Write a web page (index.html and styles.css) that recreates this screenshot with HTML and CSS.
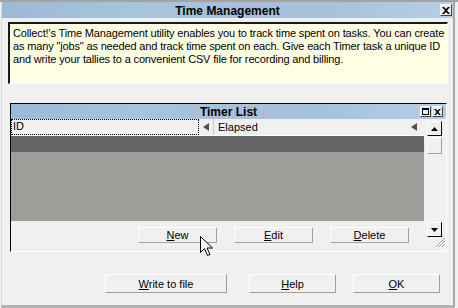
FILE: index.html
```html
<!DOCTYPE html>
<html lang="en">
  <head>
    <meta charset="UTF-8" />
    <meta name="viewport" content="width=device-width, initial-scale=1.0" />
    <title>Time Management</title>
    <link rel="stylesheet" href="styles.css">
  </head>
  <body>
    <div class="window">
      <div class="titlebar">
        <span></span>
        <span class="title">Time Management</span>
        <span class="tb-btn close">
          <svg width="8" height="7" viewBox="0 0 8 7"><path d="M0 0h2l2 2 2-2h2L5 3.5 8 7H6L4 5 2 7H0l3-3.5z" fill="#000"/></svg>
        </span>
      </div>

      <div class="desc">
        Collect!'s Time Management utility enables you to track time spent on tasks. You can create<br>
        as many "jobs" as needed and track time spent on each. Give each Timer task a unique ID<br>
        and write your tallies to a convenient CSV file for recording and billing.
      </div>

      <div class="panel">
        <div class="panel-title">
          <span></span>
          <span class="title">Timer List</span>
          <span class="ctrls">
            <span class="tb-btn small">
              <svg width="7" height="7" viewBox="0 0 7 7"><rect x="0.5" y="0.5" width="6" height="6" fill="none" stroke="#000"/><rect x="0" y="0" width="7" height="2" fill="#000"/></svg>
            </span>
            <span class="tb-btn small">
              <svg width="7" height="6" viewBox="0 0 8 7"><path d="M0 0h2l2 2 2-2h2L5 3.5 8 7H6L4 5 2 7H0l3-3.5z" fill="#000"/></svg>
            </span>
          </span>
        </div>
        <div class="panel-body">
          <div class="list">
            <div class="header">
              <div class="col col-id"><span class="focus">ID</span></div>
              <div class="sort"><svg width="6" height="8" viewBox="0 0 6 8"><path d="M6 0v8L0 4z" fill="#505050"/></svg></div>
              <div class="col col-el">Elapsed</div>
              <div class="sort"><svg width="6" height="8" viewBox="0 0 6 8"><path d="M6 0v8L0 4z" fill="#505050"/></svg></div>
            </div>
            <div class="row-sel"></div>
            <div class="rows"></div>
            <div class="list-btns">
              <button class="btn small-btn"><u>N</u>ew</button>
              <button class="btn small-btn"><u>E</u>dit</button>
              <button class="btn small-btn"><u>D</u>elete</button>
            </div>
          </div>
          <div class="scroll">
            <span class="sb-btn"><svg width="7" height="4" viewBox="0 0 7 4"><path d="M3.5 0L7 4H0z" fill="#000"/></svg></span>
            <span class="sb-thumb"></span>
            <span class="sb-space"></span>
            <span class="sb-btn down"><svg width="7" height="4" viewBox="0 0 7 4"><path d="M0 0h7L3.5 4z" fill="#000"/></svg></span>
            <span class="grip">
              <svg width="11" height="11" viewBox="0 0 11 11"><path d="M10 1L1 10M10 4L4 10M10 7L7 10" stroke="#a0a0a0" stroke-width="1"/><path d="M11 1L1 11M11 4L4 11M11 7L7 11" stroke="#fff" stroke-width="1"/></svg>
            </span>
          </div>
        </div>
      </div>

      <div class="actions">
        <button class="btn wide"><u>W</u>rite to file</button>
        <button class="btn mid"><u>H</u>elp</button>
        <button class="btn mid"><u>O</u>K</button>
      </div>
    </div>

    <svg class="cursor" width="13" height="21" viewBox="0 0 13 21">
      <path d="M0.5 0.5v16l4-4 3 7 2.5-1-3-6.5h5.5z" fill="#fff" stroke="#000" stroke-width="1"/>
    </svg>
  </body>
</html>
```

FILE: styles.css
```css
body {
  margin: 0;
  width: 458px;
  height: 306px;
  border-top: 2px solid #a3a3a3;
  background: #f0f0f0;
  font-family: "Liberation Sans", Arial, sans-serif;
  font-size: 11px;
  color: #000;
  overflow: hidden;
  position: relative;
}

.window {
  width: 451px;
  height: 303px;
  border-right: 2px solid #a8a8a8;
  border-bottom: 3px solid #b4b4b4;
  border-left: 1px solid #dcdcdc;
  margin-left: 1px;
}

.titlebar,
.panel-title {
  display: grid;
  grid-template-columns: 1fr auto 1fr;
  align-items: center;
  background: linear-gradient(to right, #9cb9d6, #a5c6dc 30%, #a9bfdb 55%, #a7c4dc 75%, #b6cee6);
  font-weight: bold;
}

.titlebar {
  height: 16px;
  font-size: 12px;
}

.titlebar .title {
  padding-top: 1px;
}

.tb-btn {
  display: flex;
  align-items: center;
  justify-content: center;
  width: 10px;
  height: 10px;
  background: #ececec;
  border: 1px solid;
  border-color: #fff #404040 #404040 #fff;
}

.close {
  justify-self: end;
  margin-right: 1px;
}

.desc {
  margin: 4px 0 0 6px;
  width: 431px;
  height: 53px;
  padding: 3px;
  background: #ffffe4;
  border-top: 2px solid #1a1a1a;
  border-left: 2px solid #1a1a1a;
  border-right: 1px solid #fff;
  border-bottom: 1px solid #fff;
  line-height: 13px;
  letter-spacing: -0.15px;
  white-space: nowrap;
}

.panel {
  margin: 19px 0 0 8px;
  width: 435px;
  height: 147px;
  border-top: 1px solid #000;
  border-left: 1px solid #000;
  border-right: 1px solid #fff;
  border-bottom: 1px solid #fff;
  display: flex;
  flex-direction: column;
}

.panel-title {
  height: 15px;
  font-size: 12px;
}

.ctrls {
  justify-self: end;
  display: flex;
  gap: 1px;
  margin-right: 3px;
}

.tb-btn.small {
  width: 9px;
  height: 9px;
}

.panel-body {
  flex: 1;
  display: flex;
}

.list {
  width: 413px;
  display: flex;
  flex-direction: column;
}

.header {
  height: 16px;
  display: flex;
  align-items: center;
  border-bottom: 1px solid #fff;
}

.col-id {
  width: 188px;
  height: 100%;
  display: flex;
}

.focus {
  flex: 1;
  border: 1px dotted #000;
  padding-left: 1px;
  line-height: 13px;
}

.sort {
  width: 14px;
  display: flex;
  justify-content: center;
  border-right: 1px solid #c8c8c8;
  height: 100%;
  align-items: center;
}

.sort:last-child {
  border-right: 0;
  width: 20px;
}

.col-el {
  flex: 1;
  padding-left: 4px;
}

.row-sel {
  height: 16px;
  background: #656365;
}

.rows {
  height: 69px;
  background: #9c9e9a;
}

.list-btns {
  flex: 1;
  display: flex;
  justify-content: flex-end;
  align-items: flex-start;
  gap: 17px;
  padding: 6px 15px 0 0;
}

.btn {
  font-family: "Liberation Sans", Arial, sans-serif;
  font-size: 11px;
  color: #000;
  background: #f0f0f0;
  border: 1px solid;
  border-color: #fff #a0a0a0 #a0a0a0 #fff;
  padding: 0;
}

.small-btn {
  width: 79px;
  height: 16px;
}

.scroll {
  flex: 1;
  display: flex;
  flex-direction: column;
  padding: 2px 4px 3px 3px;
}

.sb-btn {
  width: 13px;
  height: 13px;
  display: flex;
  align-items: center;
  justify-content: center;
  background: #f0f0f0;
  border: 1px solid;
  border-color: #fff #000 #000 #fff;
}

.sb-thumb {
  width: 13px;
  height: 15px;
  border: 1px solid;
  border-color: #fff #a0a0a0 #a0a0a0 #fff;
  margin-top: 1px;
}

.sb-space {
  flex: 1;
}

.grip {
  align-self: flex-end;
  margin-right: -4px;
  height: 11px;
  display: flex;
}

.actions {
  display: flex;
  justify-content: flex-end;
  gap: 17px;
  margin-top: 22px;
  padding-right: 13px;
}

.actions .btn {
  height: 19px;
}

.actions .wide {
  width: 122px;
  margin-right: 5px;
}

.actions .mid {
  width: 87px;
}

.cursor {
  position: absolute;
  left: 200px;
  top: 234px;
}
```
